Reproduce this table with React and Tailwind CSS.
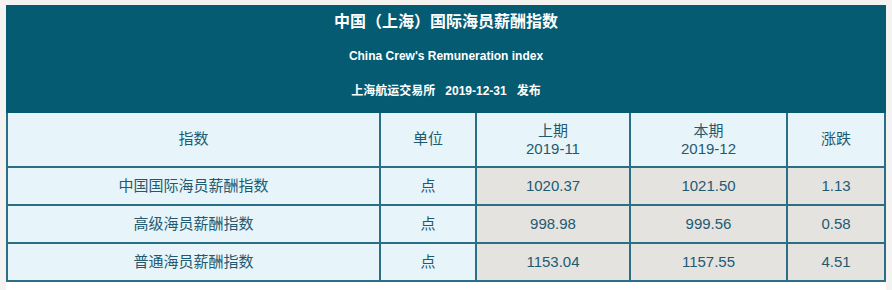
const rows = [
  { name: '中国国际海员薪酬指数', unit: '点', prev: '1020.37', cur: '1021.50', diff: '1.13' },
  { name: '高级海员薪酬指数', unit: '点', prev: '998.98', cur: '999.56', diff: '0.58' },
  { name: '普通海员薪酬指数', unit: '点', prev: '1153.04', cur: '1157.55', diff: '4.51' },
]

const font = { fontFamily: '"Liberation Sans", "Noto Sans CJK SC", sans-serif' }

export default function App() {
  return (
    <div className="w-[892px] h-[290px] bg-[#f4f3f1] pt-[5px] pl-[6px]" style={font}>
      <div className="w-[880px] h-[285px] bg-white">
        {/* Title block */}
        <div className="h-[108px] bg-[#055b72] text-white font-bold flex flex-col items-center">
          <div className="h-[34px] flex items-center text-[16px]">中国（上海）国际海员薪酬指数</div>
          <div className="h-[34px] flex items-center text-[12px]">China Crew's Remuneration index</div>
          <div className="h-[36px] flex items-center text-[12px] whitespace-pre">上海航运交易所   2019-12-31   发布</div>
        </div>

        {/* Table */}
        <div className="grid grid-cols-[371px_94px_152px_155px_96px] gap-[2px] bg-[#2b6f86] px-[2px] pb-[2px] text-[15px] text-[#1f5a70]">
          <div className="h-[53px] bg-[#e7f4f9] flex items-center justify-center">指数</div>
          <div className="h-[53px] bg-[#e7f4f9] flex items-center justify-center">单位</div>
          <div className="h-[53px] bg-[#e7f4f9] flex flex-col items-center justify-center leading-[18px]">
            <span>上期</span>
            <span>2019-11</span>
          </div>
          <div className="h-[53px] bg-[#e7f4f9] flex flex-col items-center justify-center leading-[18px]">
            <span>本期</span>
            <span>2019-12</span>
          </div>
          <div className="h-[53px] bg-[#e7f4f9] flex items-center justify-center">涨跌</div>

          {rows.map(r => (
            <div key={r.name} className="contents">
              <div className="h-[36px] bg-[#e7f4f9] flex items-center justify-center">{r.name}</div>
              <div className="h-[36px] bg-[#e7f4f9] flex items-center justify-center">{r.unit}</div>
              <div className="h-[36px] bg-[#e4e3e0] flex items-center justify-center">{r.prev}</div>
              <div className="h-[36px] bg-[#e4e3e0] flex items-center justify-center">{r.cur}</div>
              <div className="h-[36px] bg-[#e4e3e0] flex items-center justify-center">{r.diff}</div>
            </div>
          ))}
        </div>
      </div>
    </div>
  )
}
